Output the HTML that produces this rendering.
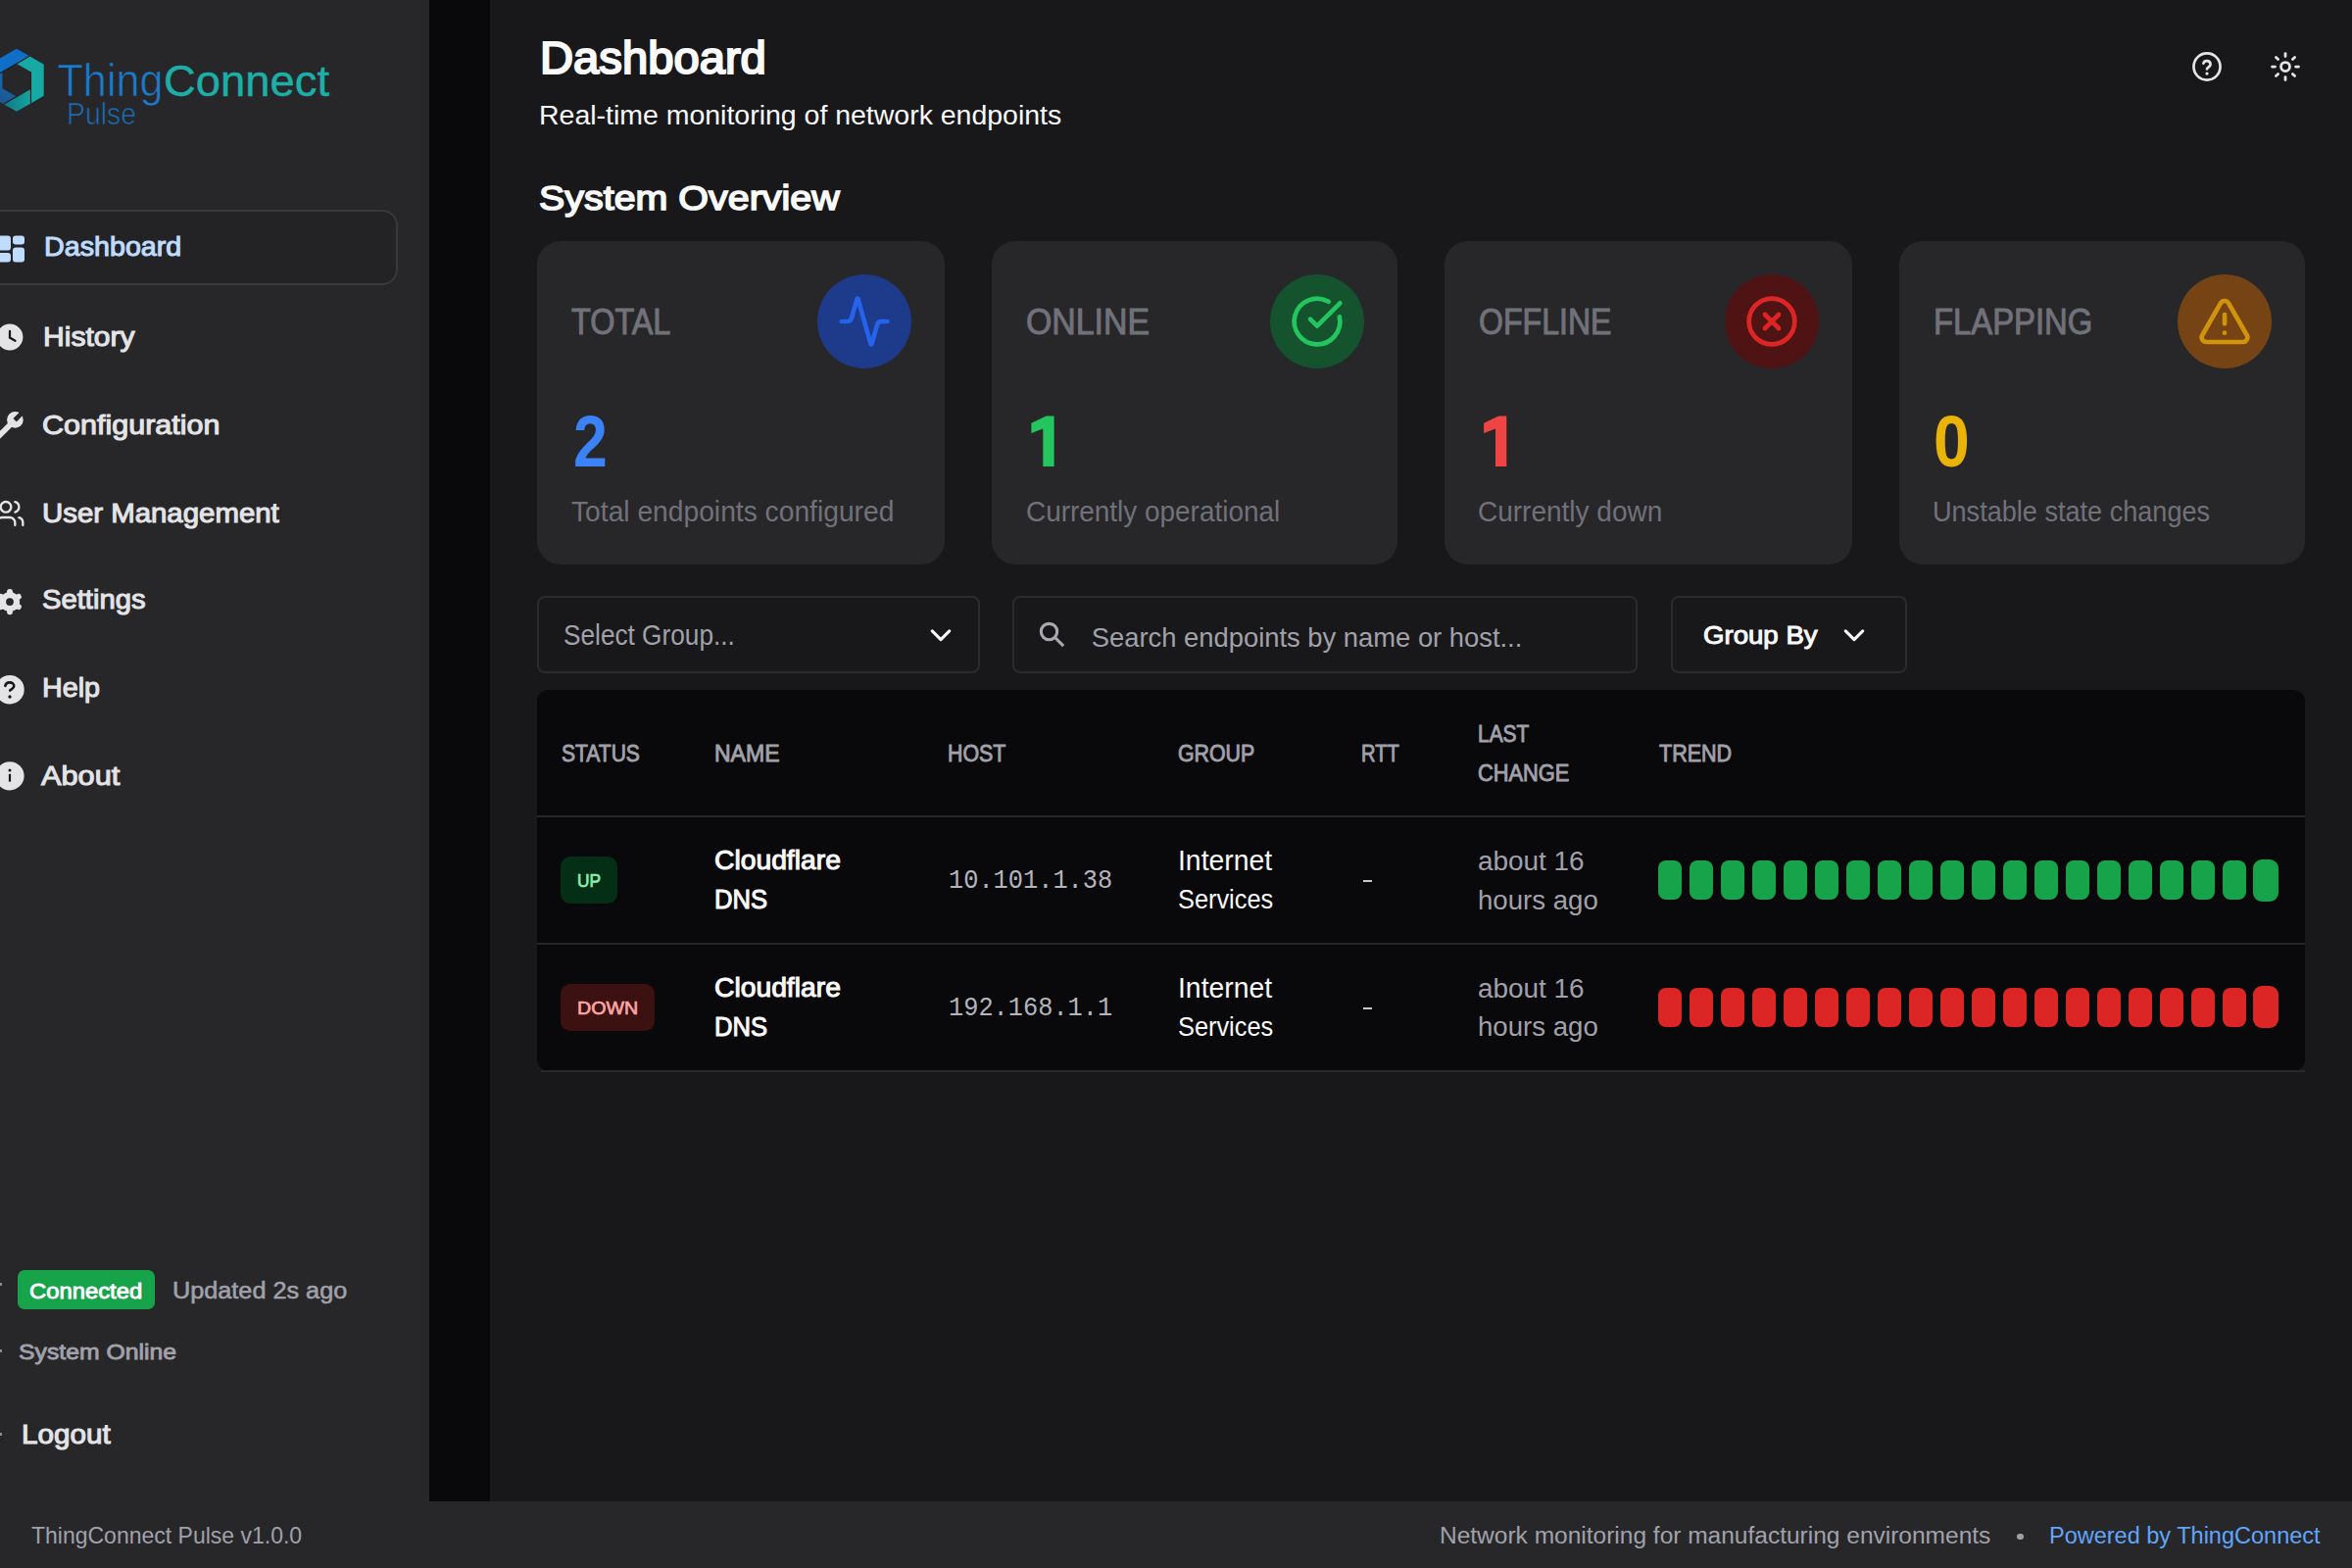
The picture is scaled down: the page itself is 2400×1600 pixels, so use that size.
<!DOCTYPE html>
<html><head><meta charset="utf-8"><title>ThingConnect Pulse</title><style>
*{margin:0;padding:0;box-sizing:border-box}
html,body{width:2400px;height:1600px;overflow:hidden;background:#18181b;font-family:"Liberation Sans",sans-serif}
.t{position:absolute;white-space:nowrap;line-height:1;transform-origin:0 0}
.r{position:absolute}
svg{position:absolute;overflow:visible}
</style></head><body>
<div class="r" style="left:0px;top:0px;width:438px;height:1600px;background:#27272a;"></div>
<div class="r" style="left:438px;top:0px;width:62px;height:1532px;background:#09090b;"></div>
<div class="r" style="left:500px;top:0px;width:1900px;height:1532px;background:#18181b;"></div>
<div class="r" style="left:0px;top:1532px;width:2400px;height:68px;background:#27272a;"></div>
<svg style="left:0px;top:0px" width="340" height="140" viewBox="0 0 340 140">
<defs><linearGradient id="gb" x1="0" y1="0" x2="1" y2="0"><stop offset="0" stop-color="#0e7a84"/><stop offset="1" stop-color="#14a3a2"/></linearGradient>
<linearGradient id="gl" x1="0" y1="0" x2="0" y2="1"><stop offset="0" stop-color="#1668b4"/><stop offset="1" stop-color="#1d5590"/></linearGradient></defs>
<polygon points="-10.90,81.00 -10.90,65.70 16.90,49.65 30.15,57.30 16.90,64.95 2.35,73.35" fill="#0f6fc7"/>
<polygon points="30.15,57.30 44.70,65.70 44.70,97.80 31.45,105.45 31.45,90.15 31.45,73.35 16.90,64.95" fill="#17a9a4"/>
<polygon points="31.45,105.45 16.90,113.85 3.65,106.20 16.90,98.55 31.45,90.15" fill="url(#gb)"/>
<polygon points="3.65,106.20 -10.90,97.80 -10.90,81.00 2.35,73.35 2.35,90.15 16.90,98.55" fill="url(#gl)"/>
<g stroke="#202024" stroke-width="1.2" fill="none">
<path d="M-10.90,81.00 L30.15,57.30"/><path d="M31.45,73.35 L31.45,105.45"/><path d="M31.45,90.15 L3.65,106.20"/>
</g>
<g font-family="Liberation Sans" stroke="#27272a" stroke-width="0.7">
<text x="58.5" y="97.8" font-size="45.5" fill="#1a7acb" textLength="108" lengthAdjust="spacingAndGlyphs">Thing</text>
<text x="167" y="97.6" font-size="45" fill="#1eaea8" stroke="#1eaea8" stroke-width="0.45" textLength="169" lengthAdjust="spacingAndGlyphs">Connect</text>
<text x="68" y="126.7" font-size="30.5" fill="#1a6db5" textLength="71" lengthAdjust="spacingAndGlyphs">Pulse</text>
</g>
</svg>
<div class="r" style="left:-20px;top:214px;width:426px;height:77px;background:#232326;border:2px solid #39393c;border-radius:16px;"></div>
<svg style="left:0px;top:240px" width="26" height="28" viewBox="0 0 26 28">
<rect x="-4" y="0.5" width="15" height="15" rx="3" fill="#bfdbfe"/>
<rect x="13" y="0.5" width="12" height="9" rx="3" fill="#bfdbfe"/>
<rect x="-4" y="18" width="15" height="9.5" rx="3" fill="#bfdbfe"/>
<rect x="13" y="12.5" width="12" height="15" rx="3" fill="#bfdbfe"/>
</svg>
<svg style="left:0px;top:330px" width="26" height="28" viewBox="0 0 26 28">
<circle cx="10" cy="14" r="13.4" fill="#e4e4e7"/>
<path d="M10 8v6.5l5.5 3.2" stroke="#18181b" stroke-width="2.3" fill="none" stroke-linecap="round"/>
</svg>
<svg style="left:0px;top:0px" width="1" height="1">
<g transform="translate(15.4,428.4) rotate(45)">
<circle cx="0" cy="0" r="8.3" fill="#e4e4e7"/>
<rect x="-2.8" y="0" width="5.6" height="34" fill="#e4e4e7"/>
<rect x="-2.35" y="-12" width="4.7" height="12.4" rx="0.6" fill="#27272a"/>
</g>
</svg>
<svg style="left:-6px;top:508px" width="32" height="32" viewBox="0 0 24 24" fill="none" stroke="#e4e4e7" stroke-width="1.75" stroke-linecap="round" stroke-linejoin="round">
<path d="M16 21v-2a4 4 0 0 0-4-4H6a4 4 0 0 0-4 4v2"/><circle cx="9" cy="7" r="4"/><path d="M22 21v-2a4 4 0 0 0-3-3.87"/><path d="M16 3.13a4 4 0 0 1 0 7.75"/>
</svg>
<svg style="left:0px;top:0px" width="1" height="1">
<g transform="translate(10,614.1)" fill="#e4e4e7">
<circle cx="0" cy="0" r="10.2"/><rect x="-2.9" y="-13.1" width="5.8" height="8" rx="2.6" transform="rotate(0)"/><rect x="-2.9" y="-13.1" width="5.8" height="8" rx="2.6" transform="rotate(60)"/><rect x="-2.9" y="-13.1" width="5.8" height="8" rx="2.6" transform="rotate(120)"/><rect x="-2.9" y="-13.1" width="5.8" height="8" rx="2.6" transform="rotate(180)"/><rect x="-2.9" y="-13.1" width="5.8" height="8" rx="2.6" transform="rotate(240)"/><rect x="-2.9" y="-13.1" width="5.8" height="8" rx="2.6" transform="rotate(300)"/>
<circle cx="0" cy="0" r="3.9" fill="#27272a"/>
</g>
</svg>
<svg style="left:0px;top:689px" width="26" height="30" viewBox="0 0 26 30">
<circle cx="10" cy="14.7" r="14.7" fill="#e4e4e7"/>
<path d="M5.3 10.8c0.6 -2.2 2.4 -3.4 4.6 -3.4c2.6 0 4.4 1.6 4.4 3.7c0 2.6 -2.6 3 -4.1 4.4" stroke="#18181b" stroke-width="2.6" fill="none" stroke-linecap="round"/>
<circle cx="10" cy="22" r="1.7" fill="#18181b"/>
</svg>
<svg style="left:0px;top:777px" width="26" height="30" viewBox="0 0 26 30">
<circle cx="10" cy="14.8" r="14.6" fill="#e4e4e7"/>
<circle cx="10" cy="9" r="1.5" fill="#18181b"/>
<rect x="8.9" y="12.8" width="2.2" height="7.8" fill="#18181b"/>
</svg>
<div class="t" style="left:44.81px;top:238.39px;font-size:27.19px;color:#bfdbfe;font-weight:400;font-family:'Liberation Sans', sans-serif;transform:scaleX(1.0546);-webkit-text-stroke:1.03px #bfdbfe;">Dashboard</div>
<div class="t" style="left:43.73px;top:329.42px;font-size:28.29px;color:#e4e4e7;font-weight:400;font-family:'Liberation Sans', sans-serif;transform:scaleX(1.0639);-webkit-text-stroke:1.07px #e4e4e7;">History</div>
<div class="t" style="left:42.57px;top:420.17px;font-size:27.60px;color:#e4e4e7;font-weight:400;font-family:'Liberation Sans', sans-serif;transform:scaleX(1.1055);-webkit-text-stroke:1.05px #e4e4e7;">Configuration</div>
<div class="t" style="left:43.12px;top:510.76px;font-size:27.05px;color:#e4e4e7;font-weight:400;font-family:'Liberation Sans', sans-serif;transform:scaleX(1.0865);-webkit-text-stroke:1.03px #e4e4e7;">User Management</div>
<div class="t" style="left:43.02px;top:598.09px;font-size:27.19px;color:#e4e4e7;font-weight:400;font-family:'Liberation Sans', sans-serif;transform:scaleX(1.0747);-webkit-text-stroke:1.03px #e4e4e7;">Settings</div>
<div class="t" style="left:43.02px;top:688.29px;font-size:27.19px;color:#e4e4e7;font-weight:400;font-family:'Liberation Sans', sans-serif;transform:scaleX(1.0562);-webkit-text-stroke:1.03px #e4e4e7;">Help</div>
<div class="t" style="left:42.23px;top:777.83px;font-size:27.88px;color:#e4e4e7;font-weight:400;font-family:'Liberation Sans', sans-serif;transform:scaleX(1.1030);-webkit-text-stroke:1.06px #e4e4e7;">About</div>
<div class="r" style="left:18px;top:1296px;width:140px;height:40px;background:#16a34a;border-radius:7px;"></div>
<div class="t" style="left:30.33px;top:1306.24px;font-size:22.66px;color:#ffffff;font-weight:400;font-family:'Liberation Sans', sans-serif;transform:scaleX(1.0506);-webkit-text-stroke:0.86px #ffffff;">Connected</div>
<div class="t" style="left:175.88px;top:1305.99px;font-size:23.47px;color:#a1a1aa;font-weight:400;font-family:'Liberation Sans', sans-serif;transform:scaleX(1.0754);-webkit-text-stroke:0.55px #a1a1aa;">Updated 2s ago</div>
<div class="t" style="left:18.83px;top:1368.71px;font-size:22.52px;color:#a1a1aa;font-weight:400;font-family:'Liberation Sans', sans-serif;transform:scaleX(1.0991);-webkit-text-stroke:0.86px #a1a1aa;">System Online</div>
<div class="t" style="left:22.12px;top:1450.96px;font-size:27.05px;color:#e4e4e7;font-weight:400;font-family:'Liberation Sans', sans-serif;transform:scaleX(1.0969);-webkit-text-stroke:1.03px #e4e4e7;">Logout</div>
<div class="r" style="left:0px;top:1309px;width:2px;height:3px;background:#8a8a90;"></div>
<div class="r" style="left:0px;top:1377px;width:2px;height:3px;background:#8a8a90;"></div>
<div class="r" style="left:0px;top:1462px;width:2px;height:3px;background:#8a8a90;"></div>
<div class="t" style="left:32.40px;top:1554.98px;font-size:23.84px;color:#a1a1aa;font-weight:400;font-family:'Liberation Sans', sans-serif;transform:scaleX(0.9650);">ThingConnect Pulse v1.0.0</div>
<div class="t" style="left:550.54px;top:36.27px;font-size:46.19px;color:#fafafa;font-weight:400;font-family:'Liberation Sans', sans-serif;transform:scaleX(1.0216);-webkit-text-stroke:2.08px #fafafa;">Dashboard</div>
<div class="t" style="left:549.50px;top:104.29px;font-size:27.62px;color:#fafafa;font-weight:400;font-family:'Liberation Sans', sans-serif;transform:scaleX(1.0311);">Real-time monitoring of network endpoints</div>
<div class="t" style="left:550.30px;top:185.00px;font-size:35.79px;color:#fafafa;font-weight:400;font-family:'Liberation Sans', sans-serif;transform:scaleX(1.1016);-webkit-text-stroke:1.61px #fafafa;">System Overview</div>
<svg style="left:2237px;top:53px" width="30" height="30" viewBox="0 0 24 24" fill="none" stroke="#e4e4e7" stroke-width="2.15" stroke-linecap="round" stroke-linejoin="round">
<circle cx="12" cy="12" r="10.84"/><path d="M9.1 9.3a2.95 2.95 0 0 1 5.75 0.9c0 1.95 -2.85 2.5 -2.85 3.7"/><path d="M12 17.6h.01" stroke-width="2.6"/>
</svg>
<svg style="left:2317px;top:53px" width="30" height="30" viewBox="0 0 24 24" fill="none" stroke="#e4e4e7" stroke-width="2.2" stroke-linecap="round" stroke-linejoin="round">
<circle cx="12" cy="12" r="3.6"/><path d="M20.40 12.00L22.80 12.00"/><path d="M17.94 17.94L19.64 19.64"/><path d="M12.00 20.40L12.00 22.80"/><path d="M6.06 17.94L4.36 19.64"/><path d="M3.60 12.00L1.20 12.00"/><path d="M6.06 6.06L4.36 4.36"/><path d="M12.00 3.60L12.00 1.20"/><path d="M17.94 6.06L19.64 4.36"/>
</svg>
<div class="r" style="left:548px;top:246px;width:416.1px;height:330px;background:#27272a;border-radius:24px;"></div>
<div class="t" style="left:583.10px;top:310.83px;font-size:36.34px;color:#71717a;font-weight:400;font-family:'Liberation Sans', sans-serif;transform:scaleX(0.8915);-webkit-text-stroke:1.0px #71717a;">TOTAL</div>
<div class="r" style="left:834.1px;top:280px;width:96px;height:96px;background:#1e3a8a;border-radius:50%;"></div>
<svg style="left:854.1px;top:300px" width="56" height="56" viewBox="0 0 24 24" fill="none" stroke="#2563eb" stroke-width="2" stroke-linecap="round" stroke-linejoin="round"><path d="M22 12h-2.48a2 2 0 0 0-1.93 1.46l-2.35 8.36a.25.25 0 0 1-.48 0L9.24 2.18a.25.25 0 0 0-.48 0l-2.35 8.36A2 2 0 0 1 4.49 12H2"/></svg>
<div class="t" style="left:584.50px;top:413.79px;font-size:74.21px;color:#3b82f6;font-weight:700;font-family:'Liberation Sans', sans-serif;transform:scaleX(0.8434);">2</div>
<div class="t" style="left:582.60px;top:507.61px;font-size:28.78px;color:#71717a;font-weight:400;font-family:'Liberation Sans', sans-serif;transform:scaleX(0.9807);">Total endpoints configured</div>
<div class="r" style="left:1011.9px;top:246px;width:413.9px;height:330px;background:#27272a;border-radius:24px;"></div>
<div class="t" style="left:1047.00px;top:310.83px;font-size:36.34px;color:#71717a;font-weight:400;font-family:'Liberation Sans', sans-serif;transform:scaleX(0.9314);-webkit-text-stroke:1.0px #71717a;">ONLINE</div>
<div class="r" style="left:1295.8px;top:280px;width:96px;height:96px;background:#14532d;border-radius:50%;"></div>
<svg style="left:1315.8px;top:300px" width="56" height="56" viewBox="0 0 24 24" fill="none" stroke="#22c55e" stroke-width="2" stroke-linecap="round" stroke-linejoin="round"><path d="M21.801 10A10 10 0 1 1 17 3.335"/><path d="m9 11 3 3L22 4"/></svg>
<svg style="left:0px;top:0px" width="1" height="1"><polygon fill="#22c55e" points="1052.40,431.70 1067.50,424.60 1075.60,424.60 1075.60,476.00 1064.30,476.00 1064.30,437.60 1052.40,442.00"/></svg>
<div class="t" style="left:1046.50px;top:507.61px;font-size:28.78px;color:#71717a;font-weight:400;font-family:'Liberation Sans', sans-serif;transform:scaleX(0.9706);">Currently operational</div>
<div class="r" style="left:1473.6px;top:246px;width:416.4px;height:330px;background:#27272a;border-radius:24px;"></div>
<div class="t" style="left:1508.70px;top:310.83px;font-size:36.34px;color:#71717a;font-weight:400;font-family:'Liberation Sans', sans-serif;transform:scaleX(0.8830);-webkit-text-stroke:1.0px #71717a;">OFFLINE</div>
<div class="r" style="left:1760.0px;top:280px;width:96px;height:96px;background:#501313;border-radius:50%;"></div>
<svg style="left:1780.0px;top:300px" width="56" height="56" viewBox="0 0 24 24" fill="none" stroke="#dc2626" stroke-width="2" stroke-linecap="round" stroke-linejoin="round"><circle cx="12" cy="12" r="10"/><path d="m15 9-6 6"/><path d="m9 9 6 6"/></svg>
<svg style="left:0px;top:0px" width="1" height="1"><polygon fill="#ef4444" points="1514.10,431.70 1529.20,424.60 1537.30,424.60 1537.30,476.00 1526.00,476.00 1526.00,437.60 1514.10,442.00"/></svg>
<div class="t" style="left:1508.20px;top:507.61px;font-size:28.78px;color:#71717a;font-weight:400;font-family:'Liberation Sans', sans-serif;transform:scaleX(0.9734);">Currently down</div>
<div class="r" style="left:1937.8px;top:246px;width:414.3px;height:330px;background:#27272a;border-radius:24px;"></div>
<div class="t" style="left:1972.90px;top:310.83px;font-size:36.34px;color:#71717a;font-weight:400;font-family:'Liberation Sans', sans-serif;transform:scaleX(0.9036);-webkit-text-stroke:1.0px #71717a;">FLAPPING</div>
<div class="r" style="left:2222.1px;top:280px;width:96px;height:96px;background:#764314;border-radius:50%;"></div>
<svg style="left:2242.1px;top:300px" width="56" height="56" viewBox="0 0 24 24" fill="none" stroke="#d1930a" stroke-width="2" stroke-linecap="round" stroke-linejoin="round"><path d="m21.73 18-8-14a2 2 0 0 0-3.48 0l-8 14A2 2 0 0 0 4 21h16a2 2 0 0 0 1.73-3"/><path d="M12 9v4"/><path d="M12 17h.01"/></svg>
<div class="t" style="left:1973.20px;top:413.79px;font-size:74.21px;color:#eab308;font-weight:700;font-family:'Liberation Sans', sans-serif;transform:scaleX(0.8919);">0</div>
<div class="t" style="left:1972.40px;top:507.61px;font-size:28.78px;color:#71717a;font-weight:400;font-family:'Liberation Sans', sans-serif;transform:scaleX(0.9416);">Unstable state changes</div>
<div class="r" style="left:548px;top:608px;width:452px;height:79px;background:#18181b;border:2px solid #2b2b2e;border-radius:8px;"></div>
<div class="t" style="left:574.80px;top:633.77px;font-size:28.65px;color:#a1a1aa;font-weight:400;font-family:'Liberation Sans', sans-serif;transform:scaleX(0.9151);">Select Group...</div>
<svg style="left:946px;top:633.7px" width="28" height="28" viewBox="0 0 24 24" fill="none" stroke="#f4f4f5" stroke-width="2.7" stroke-linecap="round" stroke-linejoin="round"><path d="m4.5 8.5 7.5 7.5 7.5-7.5"/></svg>
<div class="r" style="left:1033px;top:608px;width:638px;height:79px;background:#18181b;border:2px solid #2b2b2e;border-radius:8px;"></div>
<svg style="left:1057.7px;top:631.7px" width="30" height="30" viewBox="0 0 24 24" fill="none" stroke="#a8a8ae" stroke-width="2.5"><circle cx="10" cy="10" r="6.55"/><path d="M14.6 14.6L21.7 21.7"/></svg>
<div class="t" style="left:1113.80px;top:636.52px;font-size:27.36px;color:#a1a1aa;font-weight:400;font-family:'Liberation Sans', sans-serif;">Search endpoints by name or host...</div>
<div class="r" style="left:1705px;top:608px;width:241px;height:79px;background:#18181b;border:2px solid #2b2b2e;border-radius:8px;"></div>
<div class="t" style="left:1738.11px;top:634.85px;font-size:26.69px;color:#fafafa;font-weight:400;font-family:'Liberation Sans', sans-serif;transform:scaleX(1.0343);-webkit-text-stroke:1.01px #fafafa;">Group By</div>
<svg style="left:1877.9px;top:634px" width="28" height="28" viewBox="0 0 24 24" fill="none" stroke="#f4f4f5" stroke-width="2.7" stroke-linecap="round" stroke-linejoin="round"><path d="m4.5 8.5 7.5 7.5 7.5-7.5"/></svg>
<div class="r" style="left:548px;top:704px;width:1804px;height:389px;background:#09090b;border-radius:12px;overflow:hidden;"></div>
<div class="t" style="left:572.75px;top:757.81px;font-size:23.48px;color:#a1a1aa;font-weight:400;font-family:'Liberation Sans', sans-serif;transform:scaleX(0.8965);-webkit-text-stroke:0.89px #a1a1aa;">STATUS</div>
<div class="t" style="left:729.25px;top:757.81px;font-size:23.48px;color:#a1a1aa;font-weight:400;font-family:'Liberation Sans', sans-serif;transform:scaleX(0.9804);-webkit-text-stroke:0.89px #a1a1aa;">NAME</div>
<div class="t" style="left:967.35px;top:757.81px;font-size:23.48px;color:#a1a1aa;font-weight:400;font-family:'Liberation Sans', sans-serif;transform:scaleX(0.9107);-webkit-text-stroke:0.89px #a1a1aa;">HOST</div>
<div class="t" style="left:1202.04px;top:757.81px;font-size:23.48px;color:#a1a1aa;font-weight:400;font-family:'Liberation Sans', sans-serif;transform:scaleX(0.9083);-webkit-text-stroke:0.89px #a1a1aa;">GROUP</div>
<div class="t" style="left:1389.24px;top:757.81px;font-size:23.48px;color:#a1a1aa;font-weight:400;font-family:'Liberation Sans', sans-serif;transform:scaleX(0.8559);-webkit-text-stroke:0.89px #a1a1aa;">RTT</div>
<div class="t" style="left:1692.94px;top:757.81px;font-size:23.48px;color:#a1a1aa;font-weight:400;font-family:'Liberation Sans', sans-serif;transform:scaleX(0.9176);-webkit-text-stroke:0.89px #a1a1aa;">TREND</div>
<div class="t" style="left:1508.44px;top:738.01px;font-size:23.48px;color:#a1a1aa;font-weight:400;font-family:'Liberation Sans', sans-serif;transform:scaleX(0.8907);-webkit-text-stroke:0.89px #a1a1aa;">LAST</div>
<div class="t" style="left:1508.45px;top:777.54px;font-size:23.62px;color:#a1a1aa;font-weight:400;font-family:'Liberation Sans', sans-serif;transform:scaleX(0.9244);-webkit-text-stroke:0.9px #a1a1aa;">CHANGE</div>
<div class="r" style="left:548px;top:832px;width:1804px;height:2px;background:#27272a;"></div>
<div class="r" style="left:548px;top:962px;width:1804px;height:2px;background:#27272a;"></div>
<div class="r" style="left:552px;top:1092px;width:1800px;height:1.5px;background:#27272a;"></div>
<div class="r" style="left:572px;top:874px;width:58px;height:48px;background:#052e16;border-radius:10px;"></div>
<div class="t" style="left:588.95px;top:889.75px;font-size:18.40px;color:#86efac;font-weight:400;font-family:'Liberation Sans', sans-serif;transform:scaleX(0.9390);-webkit-text-stroke:0.7px #86efac;">UP</div>
<div class="t" style="left:729.21px;top:865.11px;font-size:26.96px;color:#fafafa;font-weight:400;font-family:'Liberation Sans', sans-serif;transform:scaleX(1.0489);-webkit-text-stroke:1.02px #fafafa;">Cloudflare</div>
<div class="t" style="left:729.21px;top:904.93px;font-size:26.91px;color:#fafafa;font-weight:400;font-family:'Liberation Sans', sans-serif;transform:scaleX(0.9518);-webkit-text-stroke:1.02px #fafafa;">DNS</div>
<div class="t" style="left:967.50px;top:884.89px;font-size:27.62px;color:#b4b4bb;font-weight:400;font-family:'Liberation Mono', monospace;transform:scaleX(0.9172);">10.101.1.38</div>
<div class="t" style="left:1201.80px;top:863.98px;font-size:28.63px;color:#fafafa;font-weight:400;font-family:'Liberation Sans', sans-serif;transform:scaleX(0.9897);">Internet</div>
<div class="t" style="left:1201.80px;top:904.20px;font-size:27.79px;color:#fafafa;font-weight:400;font-family:'Liberation Sans', sans-serif;transform:scaleX(0.9119);">Services</div>
<div class="r" style="left:1391px;top:898px;width:9px;height:2px;background:#c8c8cc;"></div>
<div class="t" style="left:1507.70px;top:863.90px;font-size:28.20px;color:#a1a1aa;font-weight:400;font-family:'Liberation Sans', sans-serif;transform:scaleX(0.9902);">about 16</div>
<div class="t" style="left:1507.70px;top:903.53px;font-size:28.34px;color:#a1a1aa;font-weight:400;font-family:'Liberation Sans', sans-serif;transform:scaleX(0.9741);">hours ago</div>
<div class="r" style="left:1692px;top:878px;width:24px;height:40px;background:#16a34a;border-radius:8px;"></div>
<div class="r" style="left:1724px;top:878px;width:24px;height:40px;background:#16a34a;border-radius:8px;"></div>
<div class="r" style="left:1756px;top:878px;width:24px;height:40px;background:#16a34a;border-radius:8px;"></div>
<div class="r" style="left:1788px;top:878px;width:24px;height:40px;background:#16a34a;border-radius:8px;"></div>
<div class="r" style="left:1820px;top:878px;width:24px;height:40px;background:#16a34a;border-radius:8px;"></div>
<div class="r" style="left:1852px;top:878px;width:24px;height:40px;background:#16a34a;border-radius:8px;"></div>
<div class="r" style="left:1884px;top:878px;width:24px;height:40px;background:#16a34a;border-radius:8px;"></div>
<div class="r" style="left:1916px;top:878px;width:24px;height:40px;background:#16a34a;border-radius:8px;"></div>
<div class="r" style="left:1948px;top:878px;width:24px;height:40px;background:#16a34a;border-radius:8px;"></div>
<div class="r" style="left:1980px;top:878px;width:24px;height:40px;background:#16a34a;border-radius:8px;"></div>
<div class="r" style="left:2012px;top:878px;width:24px;height:40px;background:#16a34a;border-radius:8px;"></div>
<div class="r" style="left:2044px;top:878px;width:24px;height:40px;background:#16a34a;border-radius:8px;"></div>
<div class="r" style="left:2076px;top:878px;width:24px;height:40px;background:#16a34a;border-radius:8px;"></div>
<div class="r" style="left:2108px;top:878px;width:24px;height:40px;background:#16a34a;border-radius:8px;"></div>
<div class="r" style="left:2140px;top:878px;width:24px;height:40px;background:#16a34a;border-radius:8px;"></div>
<div class="r" style="left:2172px;top:878px;width:24px;height:40px;background:#16a34a;border-radius:8px;"></div>
<div class="r" style="left:2204px;top:878px;width:24px;height:40px;background:#16a34a;border-radius:8px;"></div>
<div class="r" style="left:2236px;top:878px;width:24px;height:40px;background:#16a34a;border-radius:8px;"></div>
<div class="r" style="left:2268px;top:878px;width:24px;height:40px;background:#16a34a;border-radius:8px;"></div>
<div class="r" style="left:2299px;top:876.5px;width:26px;height:43px;background:#16a34a;border-radius:9px;"></div>
<div class="r" style="left:572px;top:1003.8px;width:96px;height:48px;background:#3b1111;border-radius:10px;"></div>
<div class="t" style="left:588.95px;top:1019.55px;font-size:18.40px;color:#fca5a5;font-weight:400;font-family:'Liberation Sans', sans-serif;transform:scaleX(1.0660);-webkit-text-stroke:0.7px #fca5a5;">DOWN</div>
<div class="t" style="left:729.21px;top:994.91px;font-size:26.96px;color:#fafafa;font-weight:400;font-family:'Liberation Sans', sans-serif;transform:scaleX(1.0489);-webkit-text-stroke:1.02px #fafafa;">Cloudflare</div>
<div class="t" style="left:729.21px;top:1034.73px;font-size:26.91px;color:#fafafa;font-weight:400;font-family:'Liberation Sans', sans-serif;transform:scaleX(0.9518);-webkit-text-stroke:1.02px #fafafa;">DNS</div>
<div class="t" style="left:967.50px;top:1014.69px;font-size:27.62px;color:#b4b4bb;font-weight:400;font-family:'Liberation Mono', monospace;transform:scaleX(0.9172);">192.168.1.1</div>
<div class="t" style="left:1201.80px;top:993.78px;font-size:28.63px;color:#fafafa;font-weight:400;font-family:'Liberation Sans', sans-serif;transform:scaleX(0.9897);">Internet</div>
<div class="t" style="left:1201.80px;top:1034.00px;font-size:27.79px;color:#fafafa;font-weight:400;font-family:'Liberation Sans', sans-serif;transform:scaleX(0.9119);">Services</div>
<div class="r" style="left:1391px;top:1027.8px;width:9px;height:2px;background:#c8c8cc;"></div>
<div class="t" style="left:1507.70px;top:993.70px;font-size:28.20px;color:#a1a1aa;font-weight:400;font-family:'Liberation Sans', sans-serif;transform:scaleX(0.9902);">about 16</div>
<div class="t" style="left:1507.70px;top:1033.33px;font-size:28.34px;color:#a1a1aa;font-weight:400;font-family:'Liberation Sans', sans-serif;transform:scaleX(0.9741);">hours ago</div>
<div class="r" style="left:1692px;top:1007.8px;width:24px;height:40px;background:#dc2626;border-radius:8px;"></div>
<div class="r" style="left:1724px;top:1007.8px;width:24px;height:40px;background:#dc2626;border-radius:8px;"></div>
<div class="r" style="left:1756px;top:1007.8px;width:24px;height:40px;background:#dc2626;border-radius:8px;"></div>
<div class="r" style="left:1788px;top:1007.8px;width:24px;height:40px;background:#dc2626;border-radius:8px;"></div>
<div class="r" style="left:1820px;top:1007.8px;width:24px;height:40px;background:#dc2626;border-radius:8px;"></div>
<div class="r" style="left:1852px;top:1007.8px;width:24px;height:40px;background:#dc2626;border-radius:8px;"></div>
<div class="r" style="left:1884px;top:1007.8px;width:24px;height:40px;background:#dc2626;border-radius:8px;"></div>
<div class="r" style="left:1916px;top:1007.8px;width:24px;height:40px;background:#dc2626;border-radius:8px;"></div>
<div class="r" style="left:1948px;top:1007.8px;width:24px;height:40px;background:#dc2626;border-radius:8px;"></div>
<div class="r" style="left:1980px;top:1007.8px;width:24px;height:40px;background:#dc2626;border-radius:8px;"></div>
<div class="r" style="left:2012px;top:1007.8px;width:24px;height:40px;background:#dc2626;border-radius:8px;"></div>
<div class="r" style="left:2044px;top:1007.8px;width:24px;height:40px;background:#dc2626;border-radius:8px;"></div>
<div class="r" style="left:2076px;top:1007.8px;width:24px;height:40px;background:#dc2626;border-radius:8px;"></div>
<div class="r" style="left:2108px;top:1007.8px;width:24px;height:40px;background:#dc2626;border-radius:8px;"></div>
<div class="r" style="left:2140px;top:1007.8px;width:24px;height:40px;background:#dc2626;border-radius:8px;"></div>
<div class="r" style="left:2172px;top:1007.8px;width:24px;height:40px;background:#dc2626;border-radius:8px;"></div>
<div class="r" style="left:2204px;top:1007.8px;width:24px;height:40px;background:#dc2626;border-radius:8px;"></div>
<div class="r" style="left:2236px;top:1007.8px;width:24px;height:40px;background:#dc2626;border-radius:8px;"></div>
<div class="r" style="left:2268px;top:1007.8px;width:24px;height:40px;background:#dc2626;border-radius:8px;"></div>
<div class="r" style="left:2299px;top:1006.3px;width:26px;height:43px;background:#dc2626;border-radius:9px;"></div>
<div class="t" style="left:1468.90px;top:1555.09px;font-size:24.42px;color:#a1a1aa;font-weight:400;font-family:'Liberation Sans', sans-serif;transform:scaleX(1.0037);">Network monitoring for manufacturing environments</div>
<div class="r" style="left:2058px;top:1564.6px;width:6.8px;height:6.8px;background:#a1a1aa;border-radius:50%;"></div>
<div class="t" style="left:2090.60px;top:1555.09px;font-size:24.42px;color:#60a5fa;font-weight:400;font-family:'Liberation Sans', sans-serif;transform:scaleX(0.9630);">Powered by ThingConnect</div>
</body></html>
